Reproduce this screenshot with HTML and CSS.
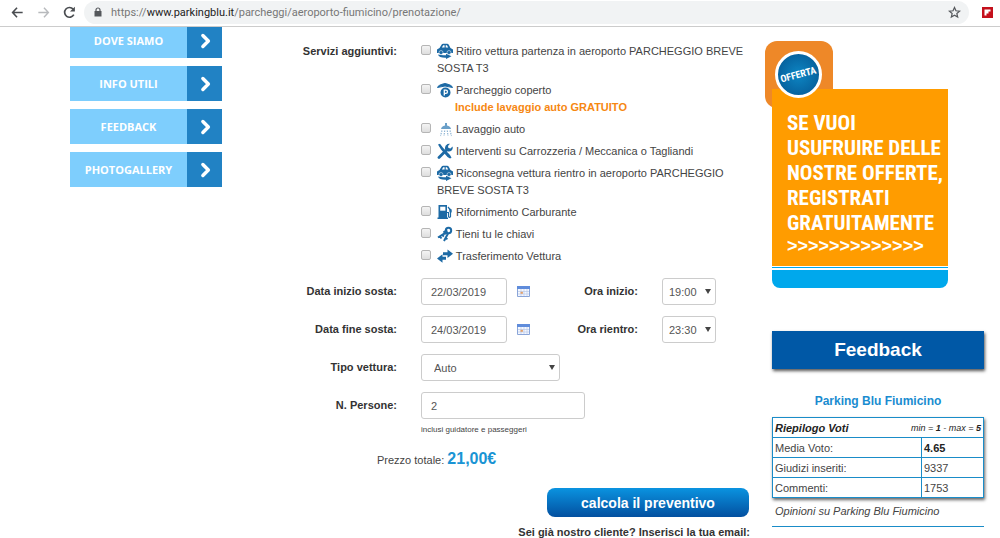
FILE: index.html
```html
<!DOCTYPE html>
<html lang="it">
<head>
    <meta charset="UTF-8">
    <meta name="viewport" content="width=device-width, initial-scale=1.0">
    <title>Parking Blu - Prenotazione Fiumicino</title>
    <link rel="stylesheet" href="styles.css">
</head>
<body>
    <!-- icone condivise -->
    <svg class="sprite" aria-hidden="true">
        <symbol id="i-car" viewBox="0 0 16 16">
            <path d="M0 6.500 2.500 5 4.500 1.800Q5 .8 6.200.8h3.900q1.100 0 1.700 1L13.500 5l2.500 1.500V10H0z" fill="#1d6aa5"/>
            <path d="M4.900 4.400 6.200 2.300h1.400v2.100zM8.700 2.300h1.200l1.300 2.100H8.700z" fill="#fff"/>
            <circle cx="4" cy="9.500" r="2" fill="#1d6aa5" stroke="#fff" stroke-width=".5"/>
            <circle cx="12" cy="9.500" r="2" fill="#1d6aa5" stroke="#fff" stroke-width=".5"/>
            <path d="M1 11.500q3 1 8 .7v-1.400l5.500 2.500L9 16v-1.200q-7 .2-8-3.300z" fill="#1d6aa5"/>
        </symbol>
        <symbol id="i-arrow" viewBox="0 0 16 16">
            <path d="m5 4 4 4 -4 4" fill="none" stroke="#fff" stroke-width="2.500" stroke-linecap="round" stroke-linejoin="round"/>
        </symbol>
        <symbol id="i-calendar" viewBox="0 0 13 11">
            <path d="M.5.5h12v10H.5z" fill="#f4f8ff" stroke="#8aa5d8"/>
            <path d="M0 0h13v3H0z" fill="#5f8cdb"/>
            <path d="M1 5.500h11M1 8h11M4 3v7M7 3v7M10 3v7" stroke="#b9c9e8" stroke-width=".7"/>
            <path d="M3.500 5.800h2.400v2H3.500z" fill="#e2a06a"/>
        </symbol>
    </svg>

    <header class="toolbar">
        <button class="tool" type="button" aria-label="Indietro">
            <svg viewBox="0 0 16 16"><path d="M13.500 8H3M7.500 3 2.800 8l4.700 5" fill="none" stroke="#4a4d51" stroke-width="1.700"/></svg>
        </button>
        <button class="tool" type="button" aria-label="Avanti">
            <svg viewBox="0 0 16 16"><path d="M2.500 8H13M8.500 3l4.700 5-4.700 5" fill="none" stroke="#b8babd" stroke-width="1.500"/></svg>
        </button>
        <button class="tool" type="button" aria-label="Ricarica">
            <svg viewBox="0 0 16 16"><path d="M12.600 10.300A5.200 5.200 0 1 1 12 4.500" fill="none" stroke="#4a4d51" stroke-width="1.800"/><path d="M13.700 1.800v5.200H8.500z" fill="#4a4d51"/></svg>
        </button>
        <div class="address">
            <svg class="lock" viewBox="0 0 8 10"><path d="M2 4.500V3a2 2 0 0 1 4 0v1.500" fill="none" stroke="#55585c" stroke-width="1.200"/><path d="M.5 4h7v5.500h-7z" fill="#55585c"/></svg>
            <span class="url">https://<b>www.parkingblu.it</b>/parcheggi/aeroporto-fiumicino/prenotazione/</span>
            <button class="star" type="button" aria-label="Preferiti">
                <svg viewBox="0 0 16 16"><path d="m8 1.800 1.800 4.100 4.500.4-3.400 3 1 4.400L8 11.400l-3.900 2.300 1-4.400-3.400-3 4.500-.4z" fill="none" stroke="#55585c" stroke-width="1.500"/></svg>
            </button>
        </div>
        <svg class="extension" viewBox="0 0 11 11"><path d="M0 0h11v11H0z" fill="#c4101c"/><path d="M2.500 2.500h6v2h-2v2h-2v2h-2z" fill="#fff"/></svg>
    </header>

    <main class="page">
        <nav class="menu">
            <a href="#"><span>DOVE SIAMO</span><i><svg><use href="#i-arrow"/></svg></i></a>
            <a href="#"><span>INFO UTILI</span><i><svg><use href="#i-arrow"/></svg></i></a>
            <a href="#"><span>FEEDBACK</span><i><svg><use href="#i-arrow"/></svg></i></a>
            <a href="#"><span>PHOTOGALLERY</span><i><svg><use href="#i-arrow"/></svg></i></a>
        </nav>

        <form class="booking">
            <div class="form-row services-row" role="group" aria-labelledby="services-label">
                <span class="form-label" id="services-label">Servizi aggiuntivi:</span>
                <div class="services">
                    <div class="service">
                        <input type="checkbox" id="s1">
                        <label for="s1"><svg><use href="#i-car"/></svg> Ritiro vettura partenza in aeroporto PARCHEGGIO BREVE SOSTA T3</label>
                    </div>
                    <div class="service">
                        <input type="checkbox" id="s2">
                        <label for="s2"><svg viewBox="0 0 16 16"><path d="M.5 5.500Q1 3 8 1.500 15 3 15.500 5.500 8 2.500.5 5.500z" fill="#1d6aa5" stroke="#1d6aa5"/><circle cx="8.500" cy="10.500" r="5" fill="#1d6aa5"/><path d="M7.300 13.500V8.200h1.600a1.500 1.500 0 0 1 0 3.100H7.300" fill="none" stroke="#fff" stroke-width="1.300"/></svg> Parcheggio coperto<strong>Include lavaggio auto GRATUITO</strong></label>
                    </div>
                    <div class="service">
                        <input type="checkbox" id="s3">
                        <label for="s3"><svg viewBox="0 0 16 16"><path d="M8 2h2v2.500q3.500.5 4 3.500H4q.5-3 4-3.500z" fill="#6a9fc8"/><path d="M5 9.500 3.500 15M7.700 9.500 7 15M10.300 9.500l.7 5.500M13 9.500l1.500 5.500" stroke="#8fb5d4" stroke-width="1.200" stroke-dasharray="1.500 1"/></svg> Lavaggio auto</label>
                    </div>
                    <div class="service">
                        <input type="checkbox" id="s4">
                        <label for="s4"><svg viewBox="0 0 16 16"><path d="m2 14.500 7-7" stroke="#1d6aa5" stroke-width="2.800" stroke-linecap="round"/><path d="M8 6q-.5-3.500 2.500-5 1.500-.5 2.500-.2L11 3l.4 2L13.500 5.500l2-2q.8 2-.9 4.100-1.800 1.600-4.600.7z" fill="#1d6aa5"/><path d="M1 1.500 3 .8l3 4 7 7.200 1.500 2.800-1.500.7-2.500-1.500-6.500-7.500z" fill="#1d6aa5"/></svg> Interventi su Carrozzeria / Meccanica o Tagliandi</label>
                    </div>
                    <div class="service">
                        <input type="checkbox" id="s5">
                        <label for="s5"><svg><use href="#i-car"/></svg> Riconsegna vettura rientro in aeroporto PARCHEGGIO BREVE SOSTA T3</label>
                    </div>
                    <div class="service">
                        <input type="checkbox" id="s6">
                        <label for="s6"><svg viewBox="0 0 16 16"><path d="M1.500 1h8.500v12.500h1V15H.5v-1.500h1z" fill="#1d6aa5"/><path d="M3.200 2.700h5.200v4H3.200z" fill="#fff"/><path d="M10 8.500h1.500v4q1 1.800 2 0V6L11 3" fill="none" stroke="#1d6aa5" stroke-width="1.200"/><path d="m12 4 2.700 1.500v3L12.500 8z" fill="#1d6aa5"/></svg> Rifornimento Carburante</label>
                    </div>
                    <div class="service">
                        <input type="checkbox" id="s7">
                        <label for="s7"><svg viewBox="0 0 16 16"><circle cx="11.500" cy="4.500" r="2.700" fill="none" stroke="#1d6aa5" stroke-width="2"/><path d="M9.500 6 1 11.500M3 10.500l1.500 2M5.500 9l1.300 1.700M11 7.500 7 15M8.500 12l2 1" fill="none" stroke="#1d6aa5" stroke-width="2"/><path d="M6 5.500 10 3l1 4.500-3.500 1.500z" fill="#1d6aa5"/></svg> Tieni tu le chiavi</label>
                    </div>
                    <div class="service">
                        <input type="checkbox" id="s8">
                        <label for="s8"><svg viewBox="0 0 16 16"><path d="M6 4.300h4.500V1.500L16 5.800l-5.500 4.100V7.300H6zM9 8.700H5.500V6.200L0 10.500l5.500 4.300v-3H9z" fill="#1d6aa5"/></svg> Trasferimento Vettura</label>
                    </div>
                </div>
            </div>

            <div class="form-row">
                <label class="form-label" for="start-date">Data inizio sosta:</label>
                <div class="controls">
                    <input type="text" class="date" id="start-date" value="22/03/2019">
                    <button type="button" class="calendar" aria-label="Scegli data inizio"><svg><use href="#i-calendar"/></svg></button>
                    <label class="form-label time-label" for="start-time">Ora inizio:</label>
                    <span class="select time"><select id="start-time"><option>19:00</option></select></span>
                </div>
            </div>
            <div class="form-row">
                <label class="form-label" for="end-date">Data fine sosta:</label>
                <div class="controls">
                    <input type="text" class="date" id="end-date" value="24/03/2019">
                    <button type="button" class="calendar" aria-label="Scegli data fine"><svg><use href="#i-calendar"/></svg></button>
                    <label class="form-label time-label" for="end-time">Ora rientro:</label>
                    <span class="select time"><select id="end-time"><option>23:30</option></select></span>
                </div>
            </div>
            <div class="form-row">
                <label class="form-label" for="vehicle">Tipo vettura:</label>
                <div class="controls">
                    <span class="select vehicle"><select id="vehicle"><option>Auto</option></select></span>
                </div>
            </div>
            <div class="form-row">
                <label class="form-label" for="people">N. Persone:</label>
                <div class="controls">
                    <input type="text" class="people" id="people" value="2">
                </div>
            </div>
            <p class="hint">inclusi guidatore e passeggeri</p>
            <p class="total">Prezzo totale: <strong>21,00€</strong></p>
            <button type="submit" class="submit">calcola il preventivo</button>
            <p class="client">Sei già nostro cliente? Inserisci la tua email:</p>
        </form>

        <aside class="side">
            <a class="offer" href="#">
                <span class="badge"></span>
                <span class="offer-box">
                    <span class="offer-text">SE VUOI<br>USUFRUIRE DELLE<br>NOSTRE OFFERTE,<br>REGISTRATI<br>GRATUITAMENTE</span>
                    <span class="chevrons">&gt;&gt;&gt;&gt;&gt;&gt;&gt;&gt;&gt;&gt;&gt;&gt;&gt;</span>
                </span>
                <span class="offer-foot"></span>
                <span class="seal"><span>OFFERTA</span></span>
            </a>

            <section class="feedback">
                <h2>Feedback</h2>
                <h3>Parking Blu Fiumicino</h3>
                <table>
                    <tr>
                        <th colspan="2"><div class="votes-head"><span>Riepilogo Voti</span><small>min = <b>1</b> - max = <b>5</b></small></div></th>
                    </tr>
                    <tr><td>Media Voto:</td><td class="value"><b>4.65</b></td></tr>
                    <tr><td>Giudizi inseriti:</td><td class="value">9337</td></tr>
                    <tr><td>Commenti:</td><td class="value">1753</td></tr>
                </table>
                <p class="opinions">Opinioni su Parking Blu Fiumicino</p>
            </section>
        </aside>
    </main>
</body>
</html>
```
FILE: styles.css
```css
* {
    box-sizing: border-box;
}
body {
    margin: 0;
    background: #fff;
    color: #444;
    font-family: "Liberation Sans", Arial, sans-serif;
    font-size: 11px;
    line-height: 17px;
}
p, h2, h3 {
    margin: 0;
}
button {
    padding: 0;
    border: none;
    background: none;
    cursor: pointer;
}
svg {
    display: block;
}
.sprite {
    display: none;
}

/* barra del browser */
.toolbar {
    display: flex;
    align-items: center;
    height: 27px;
    padding: 0 7px 2px 10px;
    border-bottom: 1px solid #ccc;
}
.tool {
    width: 15px;
    margin-right: 11px;
}
.tool svg {
    width: 15px;
    height: 15px;
}
.address {
    flex: 1;
    display: flex;
    align-items: center;
    height: 23px;
    margin: 0 13px 0 -4px;
    padding: 0 8px 0 10px;
    border-radius: 12px;
    background: #f1f3f4;
}
.lock {
    width: 8px;
    height: 10px;
}
.url {
    flex: 1;
    margin-left: 9px;
    color: #777;
    font-family: Roboto, "Open Sans", sans-serif;
    font-size: 11px;
}
.url b {
    color: #222;
    font-weight: normal;
}
.star svg {
    width: 13px;
    height: 13px;
}
.extension {
    width: 11px;
    height: 11px;
}

.page {
    display: grid;
    grid-template-columns: 152px 1fr 220px;
    padding: 0 15px 0 70px;
    overflow: hidden;
}

/* menu laterale */
.menu {
    display: flex;
    flex-direction: column;
    gap: 8px;
    margin-top: -4px;
}
.menu a {
    display: flex;
    height: 35px;
    background: #7ecefd;
    color: #fff;
    font-family: "Open Sans", sans-serif;
    font-size: 11px;
    font-weight: bold;
    line-height: 35px;
    text-align: center;
    text-decoration: none;
}
.menu span {
    flex: 1;
}
.menu i {
    display: flex;
    align-items: center;
    justify-content: center;
    width: 35px;
    padding-left: 4px;
    background: #2182c4;
}
.menu svg {
    width: 22px;
    height: 22px;
}

/* modulo di prenotazione */
.booking {
    padding-top: 16px;
    margin-right: 15px;
}
.form-row {
    display: grid;
    grid-template-columns: 175px 1fr;
    column-gap: 24px;
    align-items: center;
    margin-bottom: 11px;
}
.form-label {
    color: #333;
    font-weight: bold;
    text-align: right;
}
.services-row {
    align-items: start;
    margin-bottom: 13px;
}
.services {
    display: flex;
    flex-direction: column;
    gap: 5px;
}
.service {
    display: flex;
    align-items: flex-start;
    gap: 6px;
}
.service input {
    appearance: none;
    flex: none;
    width: 10px;
    height: 10px;
    margin: 2px 0 0;
    border: 1px solid #b5b5b5;
    border-radius: 2px;
    background: linear-gradient(#f4f4f4, #dedede);
}
.service input:checked {
    background: #2182c4;
}
.service svg {
    display: inline-block;
    width: 16px;
    height: 16px;
    margin: -2px 0;
    vertical-align: text-bottom;
}
.service strong {
    display: block;
    padding-left: 18px;
    color: #f68712;
}
.controls {
    display: flex;
    align-items: center;
}
.controls input,
select {
    height: 27px;
    padding: 0 9px;
    border: 1px solid #ccc;
    border-radius: 3px;
    background: #fff;
    color: #555;
    font-family: inherit;
    font-size: 11px;
}
.controls .date {
    width: 86px;
}
.controls .people {
    width: 164px;
}
.calendar {
    margin-left: 10px;
}
.calendar svg {
    width: 13px;
    height: 11px;
}
.time-label {
    width: 108px;
    margin-right: 24px;
}
.select {
    position: relative;
}
.select::after {
    content: "";
    position: absolute;
    top: 11px;
    right: 5px;
    border: 3px solid transparent;
    border-top: 5px solid #444;
    border-bottom: 0;
    pointer-events: none;
}
select {
    display: block;
    appearance: none;
    width: 100%;
}
.time {
    width: 54px;
}
.time select {
    padding: 0 6px;
}
.vehicle {
    width: 139px;
}
.vehicle select {
    padding-left: 12px;
}
.hint {
    margin: -9px 0 0 199px;
    color: #444;
    font-size: 8px;
}
.total {
    margin: 12px 0 0 155px;
}
.total strong {
    color: #1a94d4;
    font-size: 16px;
}
.submit {
    display: block;
    width: 202px;
    height: 29px;
    margin: 19px 1px 7px auto;
    border-radius: 8px;
    background: linear-gradient(#0a93e0, #0350a0);
    color: #fff;
    font-family: inherit;
    font-size: 14px;
    font-weight: bold;
}
.client {
    height: 15px;
    color: #333;
    font-weight: bold;
    text-align: right;
}

/* offerta */
.offer {
    display: block;
    position: relative;
    width: 183px;
    margin-top: 62px;
    padding-left: 7px;
    color: #fff;
    text-decoration: none;
}
.badge {
    position: absolute;
    top: -48px;
    left: 0;
    width: 68px;
    height: 67px;
    border-radius: 12px;
    background: #ee8828;
}
.offer-box {
    display: block;
    position: relative;
    height: 177px;
    padding: 22px 0 0 15px;
    background: #ff9c00;
    font-weight: bold;
}
.offer-text {
    display: block;
    font-family: "Liberation Sans Narrow", "Roboto Condensed", "Liberation Sans", sans-serif;
    font-size: 21px;
    line-height: 25px;
    white-space: nowrap;
}
.chevrons {
    display: block;
    font-size: 18px;
    line-height: 20px;
}
.offer-foot {
    display: block;
    position: relative;
    height: 22px;
    border-top: 1px solid #fff;
    border-radius: 0 0 8px 8px;
    background: linear-gradient(#00a8ec 1px, #fff 1px, #fff 3px, #00a8ec 3px);
}
.seal {
    display: flex;
    align-items: center;
    justify-content: center;
    position: absolute;
    top: -38px;
    left: 10px;
    width: 47px;
    height: 47px;
    border: 3px solid #fff;
    border-radius: 50%;
    background: radial-gradient(#0d86c4, #04548f);
    font-family: "Liberation Sans Narrow", "Roboto Condensed", "Liberation Sans", sans-serif;
    font-size: 10px;
    font-weight: bold;
}
.seal span {
    transform: rotate(-15deg);
}

/* feedback */
.feedback {
    margin: 43px 1px 0 7px;
    border-bottom: 1px solid #1a8cc8;
}
.feedback h2 {
    background: #0058a6;
    box-shadow: 1px 2px 3px #555;
    color: #fff;
    font-size: 19px;
    line-height: 38px;
    text-align: center;
}
.feedback h3 {
    margin: 23px 0 7px;
    color: #1a8cd0;
    font-size: 12px;
    line-height: 18px;
    text-align: center;
}
.feedback table {
    width: 100%;
    border-collapse: collapse;
    box-shadow: 1px 2px 3px #666;
}
.feedback th,
.feedback td {
    height: 20px;
    padding: 0 2px;
    border: 1px solid #1a8cc8;
    line-height: 18px;
    text-align: left;
}
.votes-head {
    display: flex;
    justify-content: space-between;
    color: #222;
    font-style: italic;
}
.votes-head small {
    font-size: 9px;
    font-weight: normal;
}
.value {
    width: 62px;
}
.value b {
    color: #222;
}
.opinions {
    padding: 5px 0 6px 3px;
    font-style: italic;
}
```
